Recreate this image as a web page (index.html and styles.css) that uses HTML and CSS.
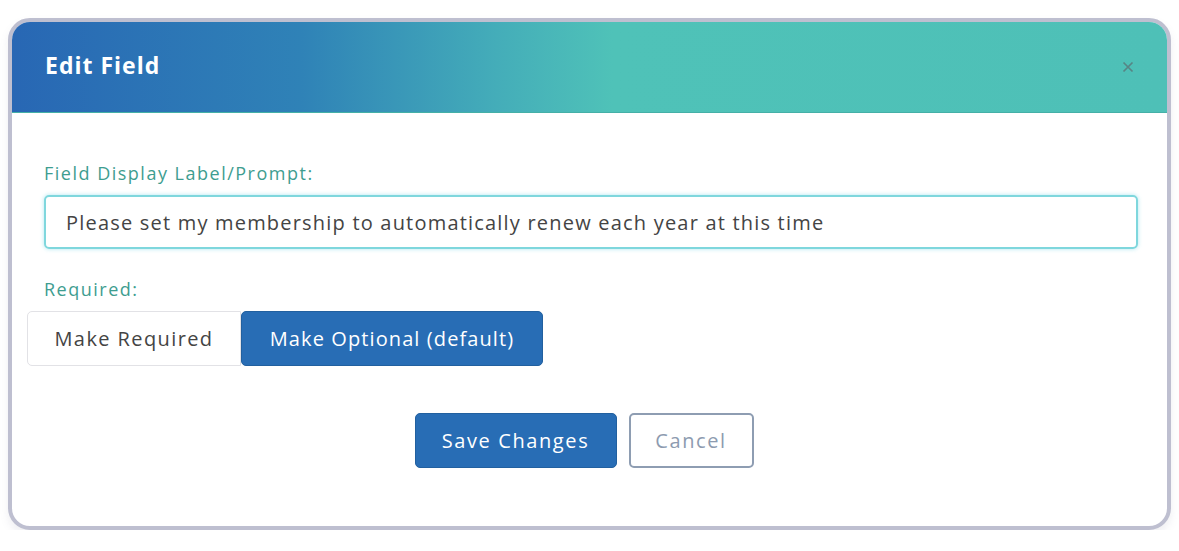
FILE: index.html
```html
<!DOCTYPE html>
<html lang="en">
<head>
<meta charset="utf-8">
<title>Edit Field</title>
<link rel="stylesheet" href="styles.css">
</head>
<body>
<div class="modal">
  <div class="modal-header">
    <h1 class="modal-title">Edit Field</h1>
    <button class="close-btn" aria-label="Close">
      <svg width="12" height="12" viewBox="0 0 12 12"><path d="M1.5 1.5L10.5 10.5M10.5 1.5L1.5 10.5" stroke="#578585" stroke-width="1.7" fill="none"/></svg>
    </button>
  </div>
  <div class="modal-body">
    <label class="field-label">Field Display Label/Prompt:</label>
    <div class="text-input">Please set my membership to automatically renew each year at this time</div>
    <label class="field-label req-label">Required:</label>
    <div class="toggle-group">
      <button class="toggle toggle-off">Make Required</button>
      <button class="toggle toggle-on">Make Optional (default)</button>
    </div>
    <div class="actions">
      <button class="btn btn-primary">Save Changes</button>
      <button class="btn btn-outline">Cancel</button>
    </div>
  </div>
</div>
</body>
</html>
```
FILE: styles.css
```css
* { box-sizing: border-box; }
html, body { margin: 0; padding: 0; background: #ffffff; }
body {
  font-family: "Open Sans", "Liberation Sans", sans-serif;
  padding: 18px 8px 0 8px;
}
.modal {
  width: 1163px;
  height: 512px;
  border: 4px solid #bebfd0;
  border-radius: 22px;
  background: #fff;
  overflow: hidden;
  box-shadow: 0 5px 8px rgba(120, 120, 150, 0.12);
  display: flex;
  flex-direction: column;
}
.modal-header {
  height: 91px;
  background: linear-gradient(90deg, #2867b4 0%, #2f82b7 25%, #44adb9 42%, #4fc2b8 52%, #4ec0b7 100%);
  border-bottom: 1px solid #45b0a7;
  display: flex;
  align-items: center;
  justify-content: space-between;
  padding: 0 33px 4px 33px;
}
.modal-title {
  margin: 0;
  color: #fff;
  font-size: 23px;
  font-weight: 700;
  letter-spacing: 1px;
}
.close-btn {
  background: none;
  border: 0;
  padding: 0;
  width: 12px;
  height: 12px;
  display: flex;
  margin-top: 4px;
}
.modal-body {
  display: flex;
  flex-direction: column;
  padding: 50px 29px 0 32px;
}
.field-label {
  font-size: 18px;
  line-height: 20px;
  color: #3e9d90;
  letter-spacing: 1.5px;
}
.text-input {
  margin-top: 12px;
  height: 54px;
  border: 2px solid #7fd7dd;
  border-radius: 5px;
  box-shadow: 0 0 4px rgba(120, 215, 230, 0.6);
  display: flex;
  align-items: center;
  padding-left: 20px;
  font-size: 20px;
  color: #444;
  letter-spacing: 1.2px;
}
.req-label { margin-top: 30px; }
.toggle-group {
  margin-top: 12px;
  margin-left: -17px;
  display: flex;
}
.toggle {
  height: 55px;
  font-family: inherit;
  font-size: 20px;
  letter-spacing: 1.2px;
  border-radius: 5px;
  padding: 0;
}
.toggle-off {
  width: 214px;
  background: #fff;
  border: 1px solid #e2e2e6;
  color: #444;
  letter-spacing: 1.4px;
  border-top-right-radius: 0;
  border-bottom-right-radius: 0;
}
.toggle-on {
  width: 302px;
  background: #286db5;
  border: 1px solid #22609f;
  color: #fff;
  letter-spacing: 1.1px;
}
.actions {
  margin-top: 47px;
  display: flex;
  justify-content: center;
  gap: 12px;
  margin-left: -14px;
}
.btn {
  height: 55px;
  font-family: inherit;
  font-size: 20px;
  letter-spacing: 1.6px;
  border-radius: 5px;
  padding: 0;
}
.btn-primary {
  width: 202px;
  background: #286db5;
  border: 1px solid #22609f;
  color: #fff;
}
.btn-outline {
  width: 125px;
  background: #fff;
  border: 2px solid #8e9db2;
  color: #8d9bb0;
}
```
